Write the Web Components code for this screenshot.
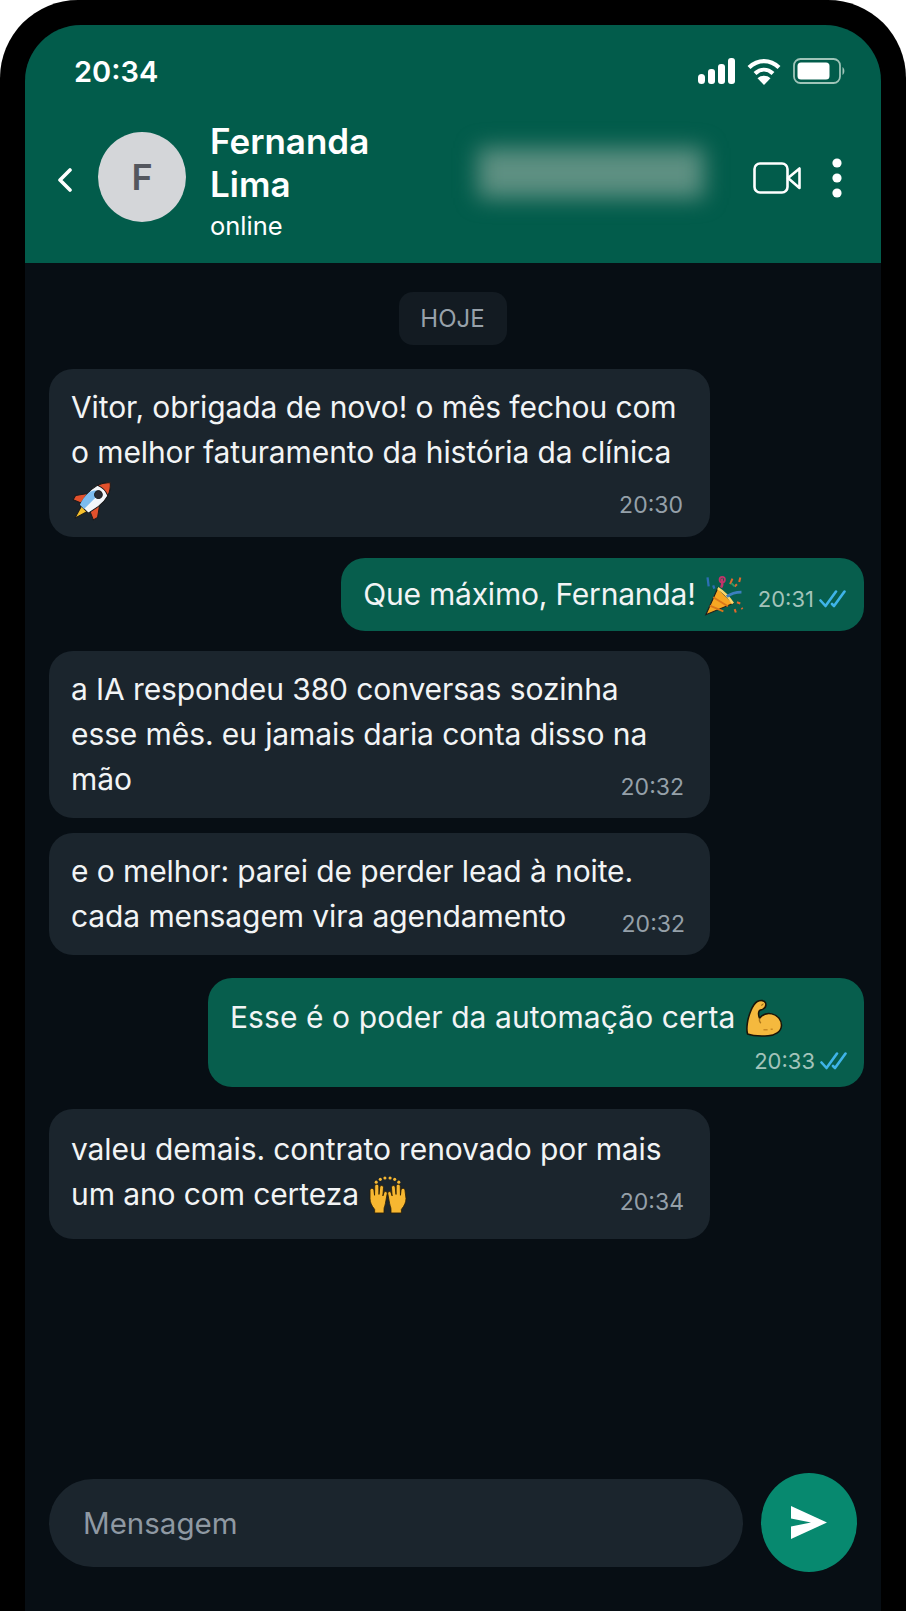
<!DOCTYPE html>
<html lang="pt-BR">
<head>
<meta charset="utf-8">
<title>Conversa</title>
<style>
  html, body { margin: 0; background: #fff; }
  body { font-family: "Inter", "Liberation Sans", sans-serif; }
</style>
</head>
<body>
<phone-frame>
  <chat-header name="Fernanda Lima" status="online" initial="F" time="20:34"></chat-header>
  <chat-thread>
    <chat-day>HOJE</chat-day>
    <chat-bubble time="20:30" style="--time-pad:5px;--pad-b:17px">Vitor, obrigada de novo! o mês fechou com<br>o melhor faturamento da história da clínica<br><chat-emoji name="rocket"></chat-emoji></chat-bubble>
    <chat-bubble side="out" mode="inline" time="20:31" style="--top:21px;--ls:-.2px">Que máximo, Fernanda! <chat-emoji name="party"></chat-emoji></chat-bubble>
    <chat-bubble time="20:32" style="--top:20px">a IA respondeu 380 conversas sozinha<br>esse mês. eu jamais daria conta disso na<br>mão</chat-bubble>
    <chat-bubble time="20:32" style="--top:15px;--time-pad:3px">e o melhor: parei de perder lead à noite.<br>cada mensagem vira agendamento</chat-bubble>
    <chat-bubble side="out" mode="stack" time="20:33" style="--top:23px;--width:656px;--ls:.08px">Esse é o poder da automação certa <chat-emoji name="muscle"></chat-emoji></chat-bubble>
    <chat-bubble time="20:34" style="--top:22px;--pad-t:18px;--pad-b:22px">valeu demais. contrato renovado por mais<br>um ano com certeza <chat-emoji name="hands"></chat-emoji></chat-bubble>
  </chat-thread>
  <chat-composer placeholder="Mensagem"></chat-composer>
</phone-frame>

<script>
class PhoneFrame extends HTMLElement {
  constructor() {
    super();
    this.attachShadow({ mode: "open" }).innerHTML = `
      <style>
        :host { display: block; width: 906px; height: 1611px; box-sizing: border-box; padding: 25px 25px 0; background: #000; border-radius: 78px 78px 0 0; overflow: hidden; }
        .screen { height: 100%; display: flex; flex-direction: column; background: #070e14; border-radius: 56px 56px 0 0; overflow: hidden; color: #fff; }
      </style>
      <div class="screen"><slot></slot></div>`;
  }
}

class ChatHeader extends HTMLElement {
  connectedCallback() {
    const name = this.getAttribute("name");
    const status = this.getAttribute("status");
    const initial = this.getAttribute("initial");
    const time = this.getAttribute("time");
    this.attachShadow({ mode: "open" }).innerHTML = `
      <style>
        :host { display: block; flex: none; height: 238px; box-sizing: border-box; background: #025c4b; color: #fff; font-family: "Inter", sans-serif; }
        .status { display: flex; align-items: center; justify-content: space-between; padding: 31px 36px 0 49px; height: 30px; }
        .clock { font-size: 29px; font-weight: 600; line-height: 30px; margin-top: 2px; }
        .sys { display: flex; align-items: center; gap: 12px; }
        svg { display: block; }
        .bar { display: flex; align-items: center; padding: 27px 39px 0 33px; }
        .back { margin-top: 3px; }
        .avatar { width: 88px; height: 90px; margin: -3px 0 0 26px; border-radius: 50%; background: #d4d6d9; color: #54575e; font-size: 36px; font-weight: 600; display: flex; align-items: center; justify-content: center; flex: none; }
        .who { margin: 7px 0 0 24px; width: 200px; }
        .name { font-size: 35px; font-weight: 600; line-height: 43px; }
        .state { font-size: 25.5px; line-height: 36px; margin-top: 2px; }
        .blur { width: 226px; height: 50px; margin-left: 68px; margin-top: -11px; background: #5e9082; filter: blur(11px); flex: none; }
        .actions { margin: -2px 0 0 auto; display: flex; align-items: center; gap: 31px; }
      </style>
      <div class="status">
        <span class="clock">${time}</span>
        <div class="sys">
          <svg width="37" height="26" viewBox="0 0 37 26" fill="#fff"><rect x="0" y="16" width="7" height="10" rx="3.5"/><rect x="10" y="11" width="7" height="15" rx="3"/><rect x="20" y="6" width="7" height="20" rx="3"/><rect x="30" y="0" width="7" height="26" rx="3"/></svg>
          <svg width="34" height="27" viewBox="0 0 34 27" fill="none" stroke="#fff" stroke-width="4.2"><path d="M2 9.5C11 1 23 1 32 9.5"/><path d="M8 15.5C13.5 10.5 20.5 10.5 26 15.5"/><path fill="#fff" stroke="none" d="M17 27 10.5 20.3C14 17 20 17 23.5 20.3Z"/></svg>
          <svg width="52" height="26" viewBox="0 0 52 26" fill="none"><rect x="1" y="1" width="46" height="24" rx="6.5" stroke="#9fc4b8" stroke-width="1.8"/><rect x="4.5" y="4.5" width="32" height="17" rx="3.5" fill="#fff"/><path d="M49.5 9C52 10.5 52 15.5 49.5 17Z" fill="#9fc4b8"/></svg>
        </div>
      </div>
      <div class="bar">
        <svg class="back" width="14" height="24" viewBox="0 0 14 24" fill="none" stroke="#fff" stroke-width="3.6" stroke-linecap="round" stroke-linejoin="round"><path d="M12 2 2 12l10 10"/></svg>
        <div class="avatar">${initial}</div>
        <div class="who">
          <div class="name">${name}</div>
          <div class="state">${status}</div>
        </div>
        <div class="blur"></div>
        <div class="actions">
          <svg width="48" height="32" viewBox="0 0 48 32" fill="none" stroke="#fff" stroke-width="2.6" stroke-linejoin="round"><rect x="1.5" y="1.5" width="33" height="29" rx="5.5"/><path d="M35 16 46.5 6.5V26Z"/></svg>
          <svg width="10" height="40" viewBox="0 0 10 40" fill="#fff"><circle cx="5" cy="5" r="4.6"/><circle cx="5" cy="20" r="4.6"/><circle cx="5" cy="35" r="4.6"/></svg>
        </div>
      </div>`;
  }
}

class ChatThread extends HTMLElement {
  constructor() {
    super();
    this.attachShadow({ mode: "open" }).innerHTML = `
      <style>
        :host { display: flex; flex-direction: column; flex: 1; min-height: 0; padding: 29px 17px 0 24px; }
      </style>
      <slot></slot>`;
  }
}

class ChatDay extends HTMLElement {
  constructor() {
    super();
    this.attachShadow({ mode: "open" }).innerHTML = `
      <style>
        :host { display: block; align-self: center; margin: 0 8px 24px 0; width: 108px; height: 53px; line-height: 53px; text-align: center; border-radius: 14px; background: #131b22; color: #98a1aa; font-size: 24px; font-family: "Inter", sans-serif; }
      </style>
      <slot></slot>`;
  }
}

class ChatBubble extends HTMLElement {
  connectedCallback() {
    const side = this.getAttribute("side") || "in";
    const mode = this.getAttribute("mode") || "overlap";
    const time = this.getAttribute("time");
    const ticks = side === "out" ? `
      <svg class="ticks" width="27" height="18" viewBox="0 0 27 18" fill="none" stroke="#3fb4e8" stroke-width="2.6" stroke-linecap="round" stroke-linejoin="round"><path d="M1.5 10.5 6.5 16 17 1.5"/><path d="M13 14 15 16 25.5 1.5"/></svg>` : "";
    this.attachShadow({ mode: "open" }).innerHTML = `
      <style>
        :host { display: block; box-sizing: border-box; margin-top: var(--top, 0); font-family: "Inter", sans-serif; color: #f2f4f5; font-size: 30px; line-height: 45px; letter-spacing: var(--ls, -.1px); }
        :host([side="out"]) { align-self: flex-end; width: var(--width, auto); background: #075e4d; }
        :host(:not([side="out"])) { width: 661px; background: #1b252d; }
        :host { border-radius: 24px; padding: var(--pad-t, 16px) 22px var(--pad-b, 16px); }
        .meta { display: flex; align-items: center; justify-content: flex-end; gap: 5px; font-size: 23px; line-height: 30px; letter-spacing: 0; color: #95a0a9; }
        :host([side="out"]) .meta { font-size: 22px; color: #a3c3ba; }
        .overlap .meta { margin-top: -30px; padding-right: var(--time-pad, 4px); }
        .inline { display: flex; align-items: center; gap: 15px; }
        :host([mode="inline"]) { padding: 14px 18px 14px 22px; }
        .inline .meta { margin-top: 8px; }
        :host([mode="stack"]) { padding: 17px 17px 11px 22px; }
        .stack .meta { margin-top: 6px; }
        .ticks { display: block; }
      </style>
      <div class="${mode}">
        <div class="text"><slot></slot></div>
        <div class="meta"><span>${time}</span>${ticks}</div>
      </div>`;
  }
}

const EMOJI = {
  rocket: `
    <g transform="translate(1 2) rotate(45 18 18) translate(18 18) scale(1.16) translate(-18 -18)" stroke="#1a1a1a" stroke-width=".8" stroke-linejoin="round">
      <path d="M14.5 27h7L18 39Z" fill="#f6c02c"/>
      <path d="M11.5 16 5 25l1 4 7-3Z" fill="#e2512c"/>
      <path d="M24.5 16 31 25l-1 4-7-3Z" fill="#e2512c"/>
      <path d="M18-3c6 5 8 13 7 21l-2 10H13l-2-10C10 10 12 2 18-3Z" fill="#f3f6fa"/>
      <path d="M11.2 15C10.500 20 12 25 13 28h5V8c-3 .5-6 3-6.800 7Z" fill="#7dbcf0" stroke="none"/>
      <path d="M18-3c3 2.500 5 5.500 6 9-3.500-1.500-8.500-1.500-12 0 1-3.500 3-6.500 6-9Z" fill="#e2512c"/>
      <circle cx="18" cy="11" r="3.200" fill="#2b2b33"/>
    </g>`,
  party: `
    <g transform="translate(18 18) scale(1.1) translate(-18 -18)">
    <path d="M1.500 35 12 11.500 25.500 25Z" fill="#f5a623" stroke="#1d1d1d" stroke-width="1"/>
    <path d="M5 27l12 5M8 19.500l13 8" stroke="#d9761a" stroke-width="1.600"/>
    <path d="M12 11.500C16 14 22 20 25.500 25" stroke="#fcd66b" stroke-width="2.200" fill="none"/>
    <path d="M20 19c4-3 8-4 13-4" stroke="#3c7fbf" stroke-width="2.500" fill="none"/>
    <path d="M15 11c2-3 1-5 .5-8" stroke="#c2346a" stroke-width="2.200" fill="none"/>
    <circle cx="16" cy="4" r="2.400" fill="none" stroke="#c2346a" stroke-width="1.500"/>
    <path d="M3 2l1 8M8 9l1 3" stroke="#2d6fb5" stroke-width="2" />
    <path d="M25 3l-2 5M32 2l-1 4M27 10l2-2" stroke="#e2682c" stroke-width="1.800"/>
    <path d="M24 7l3 3" stroke="#2f9a68" stroke-width="1.600"/>
    <path d="M29 24l3 1M27 30l1 3M33 29l1 1" stroke="#e2682c" stroke-width="1.800"/>
    </g>`,
  muscle: `
    <path d="M11 1.500c3-1.500 7-1.300 8 1.300.8 2.400 0 5-3 6.300-1.300.6-2.800.6-3.400 2-.7 1.800-.3 4.500.6 6.600 3-3.600 7.500-5.300 12-4.200 6 1.400 9.600 6.500 9.300 11.500-.4 6-6.300 9.500-13 9.800-7 .4-15 .2-20-1.700C1 31.300.6 27.500 1.300 22.700 2.300 15 6.500 4 11 1.500Z" fill="#f5b93e" stroke="#1a1408" stroke-width="1.500" stroke-linejoin="round"/>
    <path d="M15 5.500c.8-1 1.600-1.600 2-1.300" stroke="#9a6a16" stroke-width="1.300" fill="none"/>
    <path d="M13.200 18c-.5 2.200 0 3.500 1.300 4.500" stroke="#a8741a" stroke-width="1.300" fill="none"/>
    <path d="M17 29h4M24 28.500h2" stroke="#c98a22" stroke-width="1.500"/>`,
  hands: `
    <g fill="#f7b731" stroke="#2a1d05" stroke-width=".8" stroke-linejoin="round">
      <path d="M1 13c0-2.500 3.500-2.500 3.800-.2l.6 5L5.600 9c0-2.600 3.800-2.600 3.900 0l.2 8 .8-7c.3-2.400 3.700-2.200 3.600.4l-.6 8 1-3c.6-2 3.500-1.400 3.200.8l-1.800 9.800c-.5 2.400-1.300 3.500-1.300 5.500v3.500H5.500v-3.500C2.500 28 1 24.500 1 21Z"/>
      <path d="M35 13c0-2.500-3.500-2.500-3.800-.2l-.6 5L30.400 9c0-2.600-3.800-2.600-3.900 0l-.2 8-.8-7c-.3-2.400-3.700-2.200-3.600.4l.6 8-1-3c-.6-2-3.500-1.400-3.200.8l1.800 9.800c.5 2.400 1.300 3.500 1.300 5.500v3.500h10.100v-3.500c3-3.500 4.500-7 4.500-10.500Z"/>
    </g>
    <g fill="#f7b731"><circle cx="7" cy="5" r="1.500"/><circle cx="11" cy="2.300" r="1.500"/><circle cx="15.500" cy="1" r="1.500"/><circle cx="20.500" cy="1" r="1.500"/><circle cx="25" cy="2.300" r="1.500"/><circle cx="29" cy="5" r="1.500"/></g>`
};

class ChatEmoji extends HTMLElement {
  connectedCallback() {
    this.attachShadow({ mode: "open" }).innerHTML = `
      <style>
        :host { display: inline-block; width: 37px; height: 37px; margin-left: 2px; vertical-align: -9px; line-height: 0; }
        svg { display: block; overflow: visible; }
      </style>
      <svg width="37" height="37" viewBox="0 0 36 36">${EMOJI[this.getAttribute("name")]}</svg>`;
  }
}

class ChatComposer extends HTMLElement {
  connectedCallback() {
    this.attachShadow({ mode: "open" }).innerHTML = `
      <style>
        :host { display: flex; flex: none; align-items: center; gap: 18px; padding: 0 24px 39px; font-family: "Inter", sans-serif; }
        .field { flex: 1; height: 88px; box-sizing: border-box; padding: 0 34px; display: flex; align-items: center; background: #1b252d; border-radius: 44px; color: #8f99a3; font-size: 29.5px; }
        .send { width: 96px; height: 99px; flex: none; border-radius: 50%; background: #07896f; display: flex; align-items: center; justify-content: center; }
        svg { display: block; }
      </style>
      <div class="field">${this.getAttribute("placeholder")}</div>
      <div class="send">
        <svg width="36" height="33" viewBox="0 0 36 33" fill="#fff"><path d="M0 0 36 16.500 0 33V20.500L20 16.500 0 12.500Z"/></svg>
      </div>`;
  }
}

customElements.define("phone-frame", PhoneFrame);
customElements.define("chat-header", ChatHeader);
customElements.define("chat-thread", ChatThread);
customElements.define("chat-day", ChatDay);
customElements.define("chat-bubble", ChatBubble);
customElements.define("chat-emoji", ChatEmoji);
customElements.define("chat-composer", ChatComposer);
</script>
</body>
</html>
